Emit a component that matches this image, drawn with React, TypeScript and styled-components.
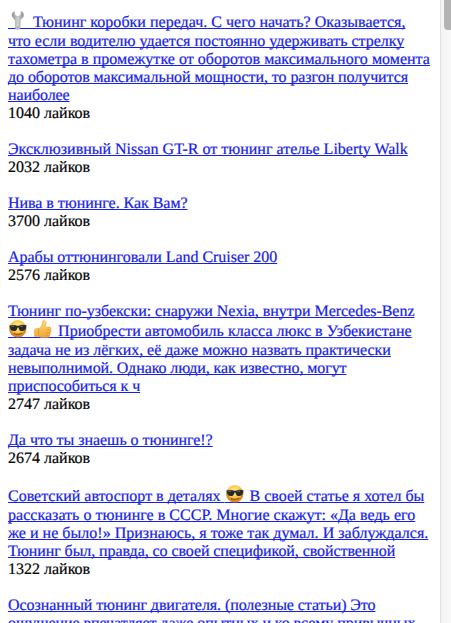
import React from 'react';
import styled, { createGlobalStyle } from 'styled-components';

const GlobalStyle = createGlobalStyle`
  html, body { margin: 0; padding: 0; overflow: hidden; background: #fff; }
`;

const Page = styled.div`
  display: flex;
  width: 451px;
  height: 623px;
  overflow: hidden;
  font: 16px/18px 'Liberation Serif', 'Times New Roman', serif;
  text-rendering: geometricPrecision;
  -webkit-text-stroke: 0.2px currentColor;
  color: #000;
`;

const Feed = styled.main`
  width: 440px;
  box-sizing: border-box;
  padding: 14px 0 0 8px;
  flex: none;
`;

const Post = styled.article`
  margin-bottom: 18px;
`;

const Title = styled.a`
  display: block;
  color: #1420ec;
  cursor: pointer;
`;

const Line = styled.span<{ $before?: number; $after?: number; $spacing?: number }>`
  display: block;
  height: 18px;
  white-space: pre;
  padding-top: ${(p) => p.$before ?? 0}px;
  padding-bottom: ${(p) => p.$after ?? 0}px;
  letter-spacing: ${(p) => p.$spacing ?? 0}px;
  text-decoration: underline;
  text-decoration-thickness: 1px;
  text-underline-offset: 1px;
  text-decoration-skip-ink: none;
`;

const Likes = styled.div`
  height: 18px;
`;

const EmojiBox = styled.span`
  display: inline-block;
  width: 21px;
  height: 18px;
  vertical-align: top;
  background: linear-gradient(#1420ec, #1420ec) 0 14px / 100% 1px no-repeat;

  svg {
    display: block;
    overflow: visible;
  }
`;

const Scrollbar = styled.div`
  box-sizing: border-box;
  width: 11px;
  height: 623px;
  border-left: 1px solid #e1e1e1;
  padding-left: 3px;
  background: linear-gradient(90deg, #f3f3f3, #f9f9f9);
  overflow: hidden;
`;

const Thumb = styled.div`
  width: 7px;
  height: 30px;
  border-radius: 0 0 0 4px;
  background: #b3b3b3;
`;

type EmojiName = 'wrench' | 'cool' | 'like';

const Emoji = ({ name }: { name: EmojiName }) => (
  <EmojiBox>
    <svg width="21" height="18" viewBox="0 1 21 18">
      {name === 'wrench' && (
        <>
          <defs>
            <linearGradient id="steel">
              <stop offset="0" stopColor="#858b8e" />
              <stop offset=".5" stopColor="#d2d5d6" />
              <stop offset="1" stopColor="#868b8f" />
            </linearGradient>
          </defs>
          <path
            d="M6.4-1.6C4.2-.9 3.6 1.4 4.3 3.6 4.8 5 6.8 6 7.2 7.6L7.3 15.1C7.5 17.3 12 17.3 12.1 15.1L12.3 7.6C12.7 5.8 14.9 5.1 15.5 3.3 16 1.3 15.2-1 13.1-1.7L12.6 2 9.8 3.6 7 2.2Z"
            fill="url(#steel)"
            stroke="#a3a7aa"
            strokeWidth=".4"
          />
          <circle cx="9.7" cy="14.6" r=".8" fill="#8c9194" />
        </>
      )}
      {name === 'cool' && (
        <>
          <defs>
            <radialGradient id="face" cy=".35">
              <stop offset=".2" stopColor="#ffe778" />
              <stop offset=".8" stopColor="#fac13e" />
              <stop offset="1" stopColor="#d98624" />
            </radialGradient>
          </defs>
          <circle cx="9.8" cy="6.8" r="8.7" fill="url(#face)" />
          <path
            d="M1.4 3.6C4.2 2.5 7.3 2.8 9.1 3.8H10.9C13 2.7 15.8 2.5 18.6 3.6L18.2 5.3C17.6 8.2 16.4 9.1 14.2 9.1 11.9 9.1 10.9 7.7 10.5 5.4H9.5C9.1 7.7 8 9.1 5.8 9.1 3.6 9.1 2.4 8.2 1.9 5.3Z"
            fill="#26282b"
          />
          <path d="M3.3 4.4 6 4.1M12.2 4.4 15 4.1" stroke="#858c92" strokeWidth=".8" />
          <path d="M6.2 11.4Q10 13.4 13.8 11.3" fill="none" stroke="#925015" strokeWidth="1.1" strokeLinecap="round" />
        </>
      )}
      {name === 'like' && (
        <>
          <defs>
            <linearGradient id="hand" x2="0" y2="1">
              <stop stopColor="#ffda6b" />
              <stop offset="1" stopColor="#f2a83a" />
            </linearGradient>
          </defs>
          <path
            d="M1.3 7.5Q3.5 5.9 6.1 6.4C8.7 4.2 9.6 2.1 9.8-.9 10.1-2.4 12.7-2.1 13.1.3 13.3 2 12.6 3.6 12.1 4.9H16.2C18.5 4.9 18.7 7.1 17.5 7.8 18.6 8.5 18.4 10.1 17.1 10.6 18 11.5 17.6 12.9 16.4 13.2 16.9 14.3 16 15.4 14.7 15.4H9.2Q6.8 15.4 5.8 14.5H1.5Z"
            fill="url(#hand)"
            stroke="#e6a13b"
            strokeWidth=".5"
          />
          <path d="M13.4 7.8H17.4M13.2 10.6H17M12.8 13.2H16.3M5.9 6.5Q4.8 10.2 5.9 14.3" fill="none" stroke="#d38a2b" strokeWidth=".65" />
        </>
      )}
    </svg>
  </EmojiBox>
);

interface TitleLine {
  content: React.ReactNode;
  before?: number;
  after?: number;
  spacing?: number;
}

const posts: { lines: TitleLine[]; likes: number }[] = [
  {
    likes: 1040,
    lines: [
      { content: <><Emoji name="wrench" /> Тюнинг коробки передач. С чего начать? Оказывается,</>, after: 1, spacing: 0.02 },
      { content: 'что если водителю удается постоянно удерживать стрелку', spacing: -0.01 },
      { content: 'тахометра в промежутке от оборотов максимального момента', spacing: 0.02 },
      { content: 'до оборотов максимальной мощности, то разгон получится', spacing: -0.07 },
      { content: 'наиболее', spacing: -0.1 },
    ],
  },
  { likes: 2032, lines: [{ content: 'Эксклюзивный Nissan GT-R от тюнинг ателье Liberty Walk' }] },
  { likes: 3700, lines: [{ content: 'Нива в тюнинге. Как Вам?', spacing: -0.04 }] },
  { likes: 2576, lines: [{ content: 'Арабы оттюнинговали Land Cruiser 200', spacing: -0.03 }] },
  {
    likes: 2747,
    lines: [
      { content: 'Тюнинг по-узбекски: снаружи Nexia, внутри Mercedes-Benz', spacing: -0.03 },
      { content: <><Emoji name="cool" /> <Emoji name="like" /> Приобрести автомобиль класса люкс в Узбекистане</>, before: 2, after: 1, spacing: 0.03 },
      { content: 'задача не из лёгких, её даже можно назвать практически', spacing: -0.03 },
      { content: 'невыполнимой. Однако люди, как известно, могут', spacing: -0.09 },
      { content: 'приспособиться к ч', spacing: -0.08 },
    ],
  },
  { likes: 2674, lines: [{ content: 'Да что ты знаешь о тюнинге!?', spacing: -0.04 }] },
  {
    likes: 1322,
    lines: [
      { content: <>Советский автоспорт в деталях <Emoji name="cool" /> В своей статье я хотел бы</>, before: 2, after: 1, spacing: -0.01 },
      { content: 'рассказать о тюнинге в СССР. Многие скажут: «Да ведь его', spacing: 0.02 },
      { content: 'же и не было!» Признаюсь, я тоже так думал. И заблуждался.', spacing: 0.02 },
      { content: 'Тюнинг был, правда, со своей спецификой, свойственной', spacing: -0.08 },
    ],
  },
  {
    likes: 1204,
    lines: [
      { content: 'Осознанный тюнинг двигателя. (полезные статьи) Это', spacing: -0.08 },
      { content: 'ощущение впечатляет даже опытных и ко всему привычных', spacing: -0.06 },
    ],
  },
];

export default function App() {
  return (
    <Page>
      <GlobalStyle />
      <Feed>
        {posts.map((post, i) => (
          <Post key={i}>
            <Title>
              {post.lines.map((line, j) => (
                <Line key={j} $before={line.before} $after={line.after} $spacing={line.spacing}>
                  {line.content}
                </Line>
              ))}
            </Title>
            <Likes>{post.likes} лайков</Likes>
          </Post>
        ))}
      </Feed>
      <Scrollbar>
        <Thumb />
      </Scrollbar>
    </Page>
  );
}
